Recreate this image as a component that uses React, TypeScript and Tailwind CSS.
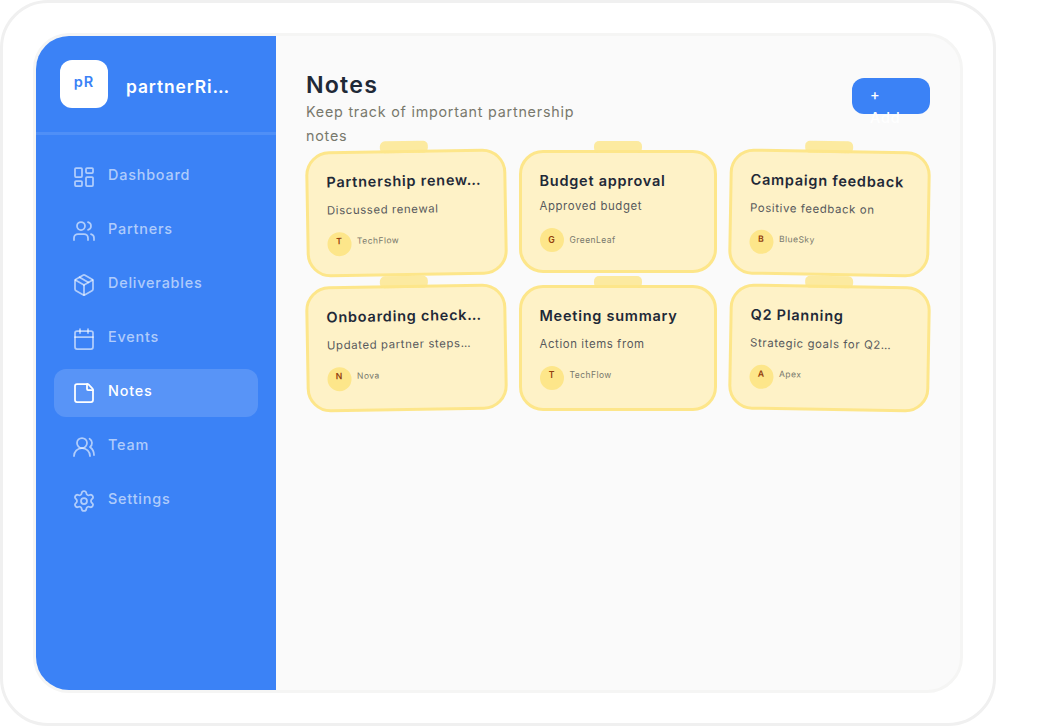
import { Calendar, LayoutDashboard, Package, Settings, StickyNote, Users, UsersRound } from 'lucide-react';

const NAV_ITEMS = [
  { label: 'Dashboard', icon: LayoutDashboard },
  { label: 'Partners', icon: Users },
  { label: 'Deliverables', icon: Package },
  { label: 'Events', icon: Calendar },
  { label: 'Notes', icon: StickyNote, active: true },
  { label: 'Team', icon: UsersRound },
  { label: 'Settings', icon: Settings },
];

const NOTES = [
  { title: 'Partnership renew…', body: 'Discussed renewal', partner: 'TechFlow', tilt: '-rotate-1' },
  { title: 'Budget approval', body: 'Approved budget', partner: 'GreenLeaf', tilt: '', compact: true },
  { title: 'Campaign feedback', body: 'Positive feedback on', partner: 'BlueSky', tilt: 'rotate-1' },
  { title: 'Onboarding check…', body: 'Updated partner steps…', partner: 'Nova', tilt: '-rotate-1' },
  { title: 'Meeting summary', body: 'Action items from', partner: 'TechFlow', tilt: '' },
  { title: 'Q2 Planning', body: 'Strategic goals for Q2…', partner: 'Apex', tilt: 'rotate-1' },
];

type Note = (typeof NOTES)[number];

function Sidebar() {
  return (
    <aside className="w-60 shrink-0 bg-[#3b82f6]">
      <div className="flex items-center gap-[18px] border-b-3 border-white/10 p-6">
        <div className="flex size-12 shrink-0 justify-center rounded-xl bg-white text-[14.5px] leading-[44px] font-semibold tracking-[0.9px] text-[#3b82f6]">
          pR
        </div>
        <span className="mt-1.5 text-[17.4px] font-semibold tracking-[0.9px] whitespace-nowrap text-white">partnerRi…</span>
      </div>

      <nav className="flex flex-col gap-1.5 p-[18px]">
        {NAV_ITEMS.map(({ label, icon: Icon, active }) => (
          <a
            key={label}
            className={`flex h-12 items-center gap-3 rounded-xl px-[18px] text-[14.4px] font-medium tracking-[0.8px] ${
              active ? 'bg-white/15 text-white' : 'text-white/60'
            }`}
          >
            <Icon size={24} strokeWidth={1.75} />
            <span className="mb-[5px]">{label}</span>
          </a>
        ))}
      </nav>
    </aside>
  );
}

function NoteCard({ note }: { note: Note }) {
  return (
    <div
      className={`relative rounded-3xl border-3 border-[#fde68a] bg-[#fef2c7] py-[18px] ${note.tilt ? 'pl-[18px]' : 'pl-[17.5px]'} ${
        note.tilt
      } ${note.compact ? 'h-[123px]' : 'h-[126px]'}`}
    >
      {/* Tape */}
      <div className="absolute -top-3 left-[72px] h-3 w-12 rounded-[5px] bg-[#fde68a]/80" />

      <h3
        className={`h-[21px] text-[14.5px] leading-[19px] font-semibold tracking-[0.75px] whitespace-nowrap text-[#1f2937] ${
          note.compact ? 'mb-[3px]' : 'mb-1.5'
        }`}
      >
        {note.title}
      </h3>
      <p className="mb-3 h-[21px] text-[11.4px] leading-[23px] tracking-[0.6px] whitespace-nowrap text-[#57595c]">{note.body}</p>
      <div className={`flex gap-[5.5px] ${note.tilt ? '' : 'pl-[0.5px]'} ${note.compact ? 'leading-6' : 'leading-[18px]'}`}>
        <div className="flex size-6 justify-center rounded-full bg-[#fde68a] pr-px text-[8.7px] font-semibold text-[#92400e]">
          {note.partner[0]}
        </div>
        <span className="text-[8.5px] tracking-[0.45px] text-[#78786c]">{note.partner}</span>
      </div>
    </div>
  );
}

export default function App() {
  return (
    <div className="h-[726px] w-[1056px] overflow-hidden bg-white font-['Inter',sans-serif]">
      <div className="h-[726px] w-[996px] rounded-[48px] border-3 border-[#f0f0f0] p-[30px]">
        <div className="flex h-[660px] overflow-hidden rounded-[36px] border-3 border-[#f5f5f4] bg-[#fafafa]">
          <Sidebar />

          <main className="flex-1 px-[30px] pt-[34px]">
            <header className="flex h-20 items-start justify-between">
              <div className="w-[280px]">
                <h1 className="text-[23.2px] leading-[30px] font-semibold tracking-[1.2px] text-[#1f2937]">Notes</h1>
                <p className="text-[14.3px] leading-6 tracking-[0.78px] text-[#78786c]">
                  Keep track of important partnership notes
                </p>
              </div>
              <button className="mt-2 flex h-9 w-[78px] items-start rounded-xl bg-[#3b82f6] px-[18px] pt-1.5 text-left text-[14.5px] leading-[22.5px] font-medium tracking-[0.75px] text-white">
                <span className="w-8">
                  +<br />
                  Add
                </span>
              </button>
            </header>

            <div className="grid grid-cols-[201px_198px_201px] items-start gap-x-3 gap-y-[9px]">
              {NOTES.map((note) => (
                <NoteCard key={note.title} note={note} />
              ))}
            </div>
          </main>
        </div>
      </div>
    </div>
  );
}
